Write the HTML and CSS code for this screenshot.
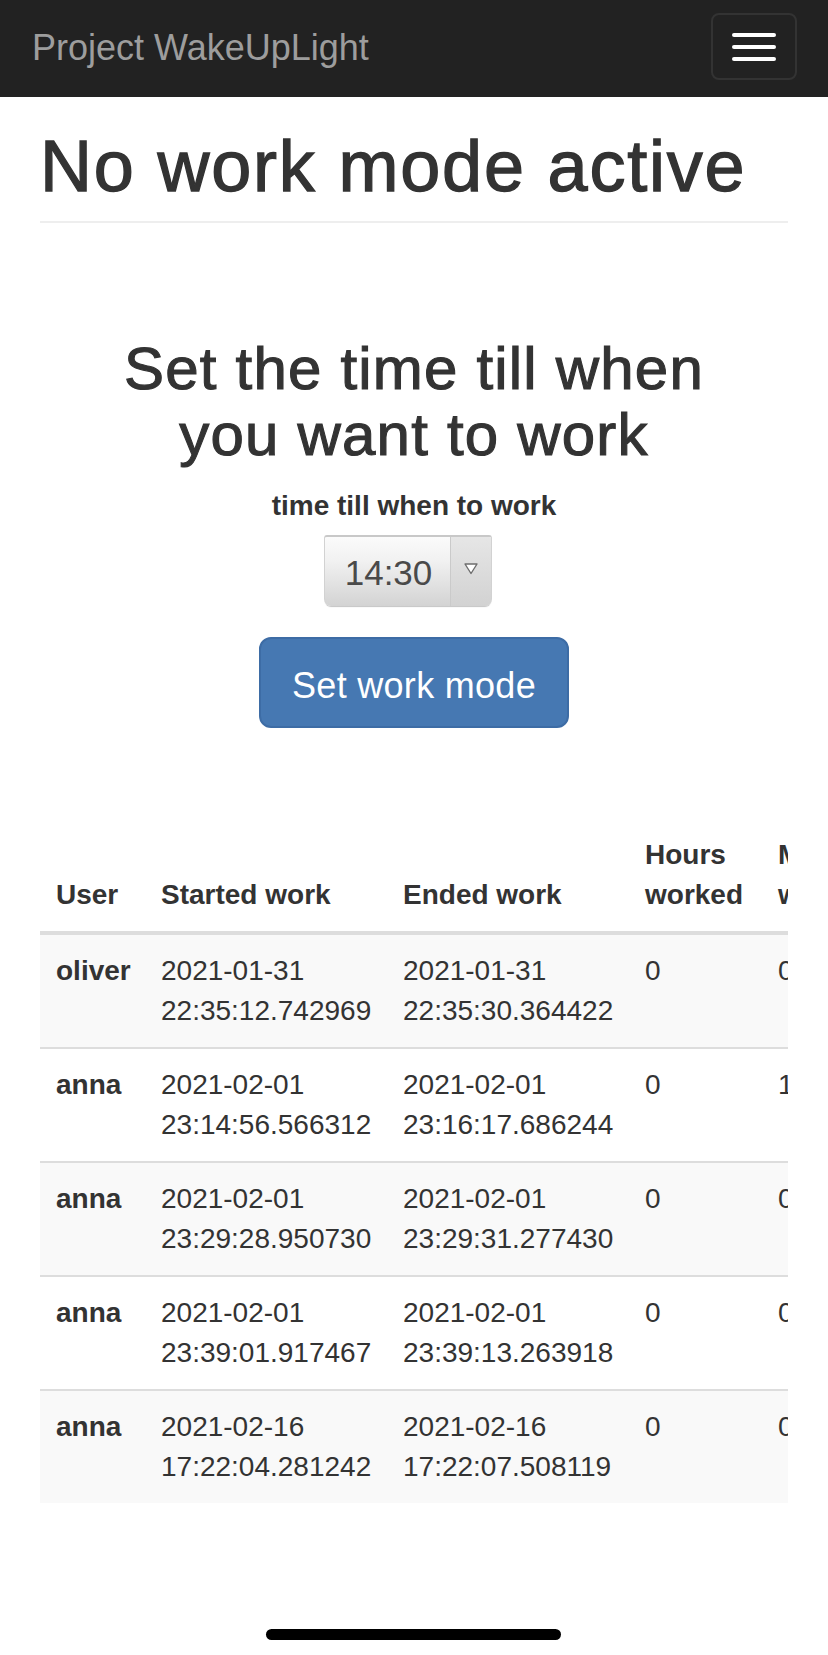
FILE: index.html
```html
<!DOCTYPE html>
<html lang="en">
<head>
<meta charset="utf-8">
<title>Project WakeUpLight</title>
<link rel="stylesheet" href="styles.css">
</head>
<body>
<nav class="navbar">
  <span class="brand">Project WakeUpLight</span>
  <button class="toggle" type="button" aria-label="Toggle navigation">
    <span class="bar"></span><span class="bar"></span><span class="bar"></span>
  </button>
</nav>
<main class="container">
  <div class="page-header">
    <h1>No work mode active</h1>
  </div>
  <section class="work-form">
    <h2>Set the time till when you want to work</h2>
    <label class="form-label">time till when to work</label>
    <div class="select">
      <span class="select-value">14:30</span>
      <span class="select-arrow">
        <svg width="16" height="13" viewBox="0 0 16 13"><polygon points="2,2 14,2 8,11.5" fill="#fff" stroke="#6d6d6d" stroke-width="1.4" stroke-linejoin="round"/></svg>
      </span>
    </div>
    <button class="btn" type="button">Set work mode</button>
  </section>
  <div class="table-wrap">
    <table class="table">
      <colgroup>
        <col class="c-user"><col class="c-date"><col class="c-date"><col class="c-num"><col class="c-num2"><col class="c-num2">
      </colgroup>
      <thead>
        <tr><th>User</th><th>Started work</th><th>Ended work</th><th>Hours worked</th><th>Minutes worked</th><th>Seconds worked</th></tr>
      </thead>
      <tbody>
        <tr><th>oliver</th><td>2021-01-31 22:35:12.742969</td><td>2021-01-31 22:35:30.364422</td><td>0</td><td>0</td><td>17</td></tr>
        <tr><th>anna</th><td>2021-02-01 23:14:56.566312</td><td>2021-02-01 23:16:17.686244</td><td>0</td><td>1</td><td>21</td></tr>
        <tr><th>anna</th><td>2021-02-01 23:29:28.950730</td><td>2021-02-01 23:29:31.277430</td><td>0</td><td>0</td><td>2</td></tr>
        <tr><th>anna</th><td>2021-02-01 23:39:01.917467</td><td>2021-02-01 23:39:13.263918</td><td>0</td><td>0</td><td>11</td></tr>
        <tr><th>anna</th><td>2021-02-16 17:22:04.281242</td><td>2021-02-16 17:22:07.508119</td><td>0</td><td>0</td><td>3</td></tr>
      </tbody>
    </table>
  </div>
</main>
<div class="home-indicator"></div>
</body>
</html>
```

FILE: styles.css
```css
html, body {
  margin: 0;
  padding: 0;
  background: #fff;
}
body {
  font-family: "Liberation Sans", Arial, sans-serif;
  color: #333;
  font-size: 28px;
  line-height: 40px;
  width: 828px;
  min-height: 1655px;
}

/* navbar */
.navbar {
  height: 97px;
  background: #222;
  display: flex;
  justify-content: space-between;
  align-items: flex-start;
  padding: 0 31px 0 32px;
  box-sizing: border-box;
}
.brand {
  color: #9d9d9d;
  font-size: 36px;
  line-height: 40px;
  margin-top: 28px;
}
.toggle {
  margin-top: 13px;
  width: 86px;
  height: 67px;
  box-sizing: border-box;
  background: transparent;
  border: 2px solid #333;
  border-radius: 8px;
  padding: 0;
  display: flex;
  flex-direction: column;
  align-items: center;
  justify-content: center;
  gap: 8px;
}
.bar {
  display: block;
  width: 44px;
  height: 4px;
  background: #fff;
  border-radius: 2px;
}

/* content */
.container {
  padding: 0 40px;
}
.page-header {
  padding: 30px 0 15px;
  border-bottom: 2px solid #eee;
}
h1 {
  margin: 0;
  font-size: 72px;
  line-height: 79px;
  font-weight: 500;
  letter-spacing: 1.8px;
  -webkit-text-stroke: 1.3px #333;
}
.work-form {
  display: flex;
  flex-direction: column;
  align-items: center;
  text-align: center;
}
h2 {
  margin: 113px 0 0;
  max-width: 640px;
  font-size: 60px;
  line-height: 66px;
  font-weight: 500;
  letter-spacing: 1.2px;
  -webkit-text-stroke: 1.1px #333;
}
.form-label {
  display: block;
  margin-top: 18px;
  font-weight: bold;
  font-size: 28px;
  line-height: 40px;
}
.select {
  margin-top: 9px;
  margin-right: 12px;
  width: 168px;
  height: 71px;
  box-sizing: border-box;
  display: flex;
  border-top: 2px solid #c8c8c8;
  border-left: 1px solid #d2d2d2;
  border-right: 1px solid #d2d2d2;
  border-radius: 3px 3px 7px 7px;
  background: linear-gradient(#fbfbfb, #f1f1f1 35%, #d3d3d3);
  box-shadow: 0 2px 1px -1px #c4c4c4;
  overflow: hidden;
}
.select-value {
  flex: 1;
  display: flex;
  align-items: center;
  justify-content: center;
  font-size: 35px;
  color: #4a4a4a;
  padding: 3px 0 0 2px;
}
.select-arrow {
  width: 41px;
  border-left: 1px solid #cacaca;
  background: linear-gradient(#e6e6e6, #d2d2d2);
  display: flex;
  justify-content: center;
  align-items: flex-start;
  padding-top: 25px;
  box-sizing: border-box;
}
.btn {
  margin-top: 31px;
  width: 310px;
  height: 91px;
  box-sizing: border-box;
  background: #4678b2;
  border: 2px solid #3d6ca5;
  border-radius: 12px;
  color: #fff;
  font-family: "Liberation Sans", Arial, sans-serif;
  font-size: 36px;
  letter-spacing: 0.3px;
  padding: 7px 0 0;
  display: flex;
  align-items: center;
  justify-content: center;
}

/* table */
.table-wrap {
  margin-top: 91px;
  width: 748px;
  overflow: hidden;
  margin-bottom: 150px;
}
.table {
  table-layout: fixed;
  width: 1022px;
  border-collapse: collapse;
  border-spacing: 0;
}
.c-user { width: 105px; }
.c-date { width: 242px; }
.c-num { width: 133px; }
.c-num2 { width: 150px; }
.table th,
.table td {
  padding: 16px;
  text-align: left;
  line-height: 40px;
  font-size: 28px;
}
.table thead th {
  vertical-align: bottom;
  font-weight: bold;
  border-bottom: 4px solid #ddd;
}
.table tbody th,
.table tbody td {
  vertical-align: top;
  border-top: 2px solid #ddd;
}
.table tbody th {
  font-weight: bold;
}
.table tbody tr:first-child th,
.table tbody tr:first-child td {
  border-top: 0;
}
.table tbody tr:nth-child(odd) th,
.table tbody tr:nth-child(odd) td {
  background: #f9f9f9;
}

/* iOS home indicator overlay */
.home-indicator {
  position: absolute;
  top: 1629px;
  left: 266px;
  width: 295px;
  height: 11px;
  border-radius: 6px;
  background: #000;
}
```
